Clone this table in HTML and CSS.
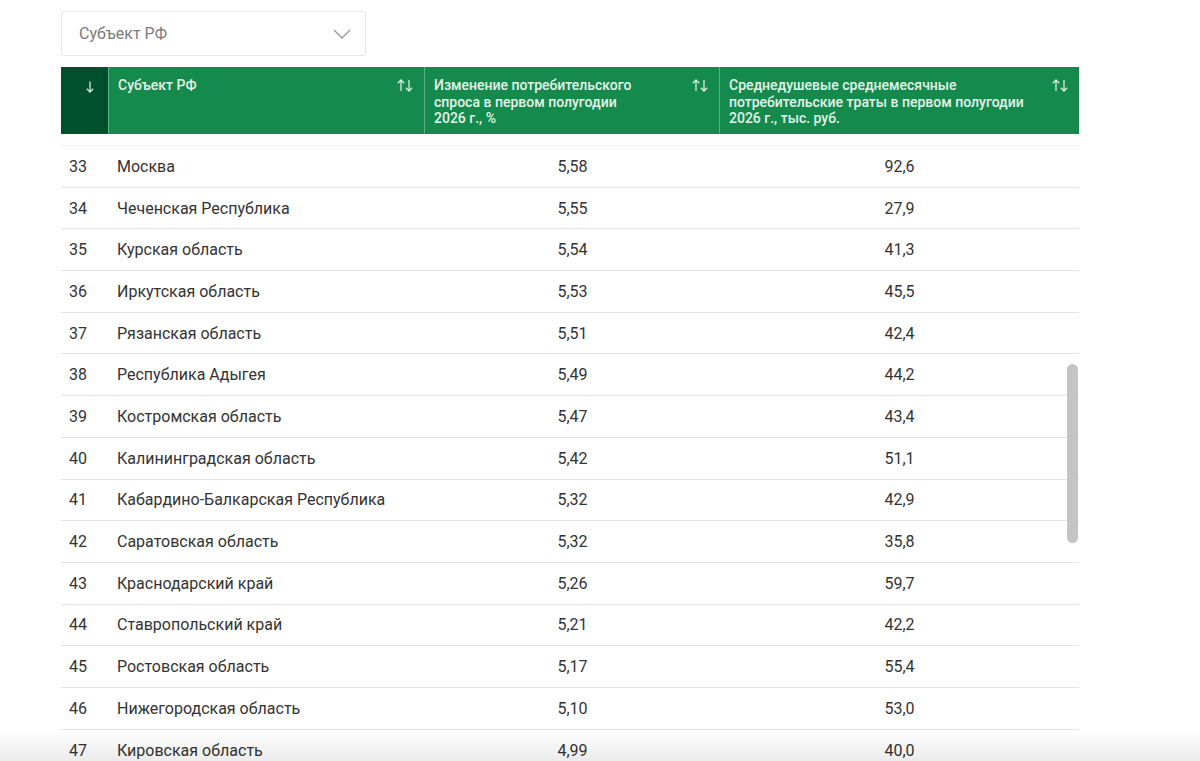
FILE: index.html
```html
<!DOCTYPE html>
<html lang="ru">
<head>
<meta charset="utf-8">
<link rel="stylesheet" href="styles.css">
</head>
<body>
<div class="page">
  <div class="select">
    <span class="select-label">Субъект РФ</span>
    <svg class="chev" width="18" height="10" viewBox="0 0 18 10"><path d="M1 1 L9 9 L17 1" fill="none" stroke="#9a9a9a" stroke-width="1.4"/></svg>
  </div>
  <div class="table">
    <div class="thead">
      <div class="th th-num"><svg width="8" height="12" viewBox="0 0 8 12"><path d="M4 0.5 V11 M0.8 7.8 L4 11 L7.2 7.8" fill="none" stroke="#cfe9d9" stroke-width="1.3"/></svg></div>
      <div class="th"><span class="th-text">Субъект РФ</span><svg class="sort" width="16" height="13" viewBox="0 0 16 13"><path d="M4 12 V1 M0.8 4.2 L4 1 L7.2 4.2 M12 1 V12 M8.8 8.8 L12 12 L15.2 8.8" fill="none" stroke="#d7efe0" stroke-width="1.3"/></svg></div>
      <div class="th"><span class="th-text">Изменение потребительского<br>спроса в первом полугодии<br>2026 г., %</span><svg class="sort" width="16" height="13" viewBox="0 0 16 13"><path d="M4 12 V1 M0.8 4.2 L4 1 L7.2 4.2 M12 1 V12 M8.8 8.8 L12 12 L15.2 8.8" fill="none" stroke="#d7efe0" stroke-width="1.3"/></svg></div>
      <div class="th"><span class="th-text">Среднедушевые среднемесячные<br>потребительские траты в первом полугодии<br>2026 г., тыс. руб.</span><svg class="sort" width="16" height="13" viewBox="0 0 16 13"><path d="M4 12 V1 M0.8 4.2 L4 1 L7.2 4.2 M12 1 V12 M8.8 8.8 L12 12 L15.2 8.8" fill="none" stroke="#d7efe0" stroke-width="1.3"/></svg></div>
    </div>
    <div class="tbody">
      <div class="tr"><span class="num">33</span><span class="name">Москва</span><span class="val">5,58</span><span class="val">92,6</span></div>
      <div class="tr"><span class="num">34</span><span class="name">Чеченская Республика</span><span class="val">5,55</span><span class="val">27,9</span></div>
      <div class="tr"><span class="num">35</span><span class="name">Курская область</span><span class="val">5,54</span><span class="val">41,3</span></div>
      <div class="tr"><span class="num">36</span><span class="name">Иркутская область</span><span class="val">5,53</span><span class="val">45,5</span></div>
      <div class="tr"><span class="num">37</span><span class="name">Рязанская область</span><span class="val">5,51</span><span class="val">42,4</span></div>
      <div class="tr"><span class="num">38</span><span class="name">Республика Адыгея</span><span class="val">5,49</span><span class="val">44,2</span></div>
      <div class="tr"><span class="num">39</span><span class="name">Костромская область</span><span class="val">5,47</span><span class="val">43,4</span></div>
      <div class="tr"><span class="num">40</span><span class="name">Калининградская область</span><span class="val">5,42</span><span class="val">51,1</span></div>
      <div class="tr"><span class="num">41</span><span class="name">Кабардино-Балкарская Республика</span><span class="val">5,32</span><span class="val">42,9</span></div>
      <div class="tr"><span class="num">42</span><span class="name">Саратовская область</span><span class="val">5,32</span><span class="val">35,8</span></div>
      <div class="tr"><span class="num">43</span><span class="name">Краснодарский край</span><span class="val">5,26</span><span class="val">59,7</span></div>
      <div class="tr"><span class="num">44</span><span class="name">Ставропольский край</span><span class="val">5,21</span><span class="val">42,2</span></div>
      <div class="tr"><span class="num">45</span><span class="name">Ростовская область</span><span class="val">5,17</span><span class="val">55,4</span></div>
      <div class="tr"><span class="num">46</span><span class="name">Нижегородская область</span><span class="val">5,10</span><span class="val">53,0</span></div>
      <div class="tr tr-last"><span class="num">47</span><span class="name">Кировская область</span><span class="val">4,99</span><span class="val">40,0</span></div>
    </div>
    <div class="scrollbar"></div>
  </div>
</div>
<div class="fade"></div>
</body>
</html>
```

FILE: styles.css
```css
html, body {
  margin: 0;
  padding: 0;
  background: #ffffff;
  height: 761px;
  overflow: hidden;
}
body {
  font-family: Roboto, "Liberation Sans", Arial, sans-serif;
  color: #333333;
}
.page {
  padding: 11px 0 0 61px;
}
.select {
  width: 305px;
  height: 45px;
  box-sizing: border-box;
  border: 1px solid #e6e6e6;
  border-radius: 3px;
  display: flex;
  align-items: center;
  justify-content: space-between;
  padding: 0 14px 0 17px;
}
.select-label {
  font-size: 16px;
  color: #7a7a7a;
}
.table {
  position: relative;
  width: 1018px;
  margin-top: 11px;
}
.thead {
  display: grid;
  grid-template-columns: 47px 316px 295px 360px;
  height: 67px;
  background: #148a4c;
}
.th {
  display: flex;
  justify-content: space-between;
  align-items: flex-start;
  padding: 10px 11px 0 9px;
  border-left: 1px solid #5cb07f;
  font-size: 14px;
  font-weight: 500;
  line-height: 16.5px;
  color: #e3f4ea;
}
.th-num {
  background: #00502e;
  border-left: none;
  justify-content: center;
  padding: 14px 0 0 10px;
}
.th-text {
  display: block;
}
.sort {
  margin-top: 2px;
  flex: none;
}
.tbody {
  margin-top: 11px;
  border-top: 1px solid #f2f2f2;
}
.tr {
  display: grid;
  grid-template-columns: 47px 317px 295px 359px;
  align-items: center;
  height: 41.7px;
  box-sizing: border-box;
  border-bottom: 1px solid #e4e4e4;
  font-size: 16px;
}
.tr-last {
  height: 36px;
  padding-top: 6px;
  border-bottom: none;
}
.num {
  padding-left: 8px;
}
.name {
  padding-left: 9px;
}
.val {
  text-align: center;
}
.scrollbar {
  position: absolute;
  left: 1006px;
  top: 297px;
  width: 11px;
  height: 179px;
  border-radius: 6px;
  background: #c4c4c4;
}
.fade {
  position: absolute;
  left: 0;
  right: 0;
  bottom: 0;
  height: 32px;
  background: linear-gradient(to bottom, rgba(0,0,0,0), rgba(0,0,0,0.08));
  pointer-events: none;
}
```
